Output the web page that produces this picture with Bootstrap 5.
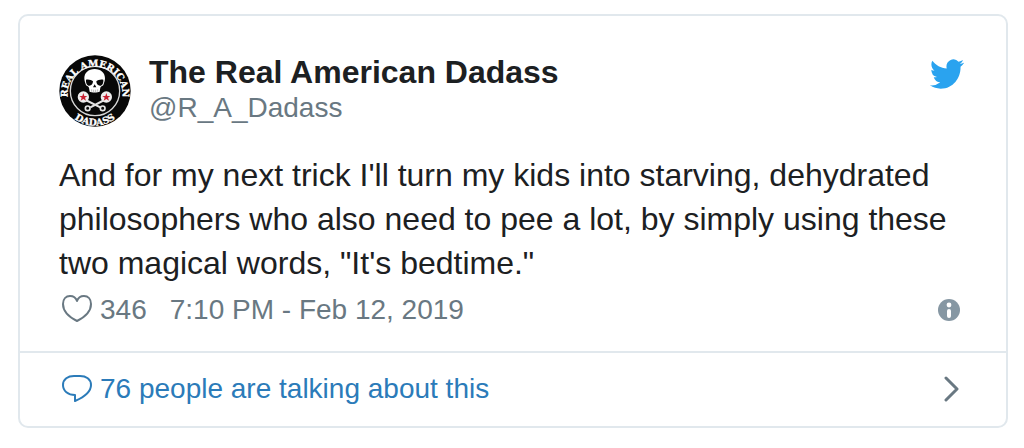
<!DOCTYPE html>
<html lang="en">
<head>
<meta charset="utf-8">
<meta name="viewport" content="width=device-width, initial-scale=1">
<title>The Real American Dadass</title>
<link rel="stylesheet" href="https://cdn.jsdelivr.net/npm/bootstrap@5.3.0/dist/css/bootstrap.min.css">
<style>
  body { font-family: "Liberation Sans", Arial, sans-serif; background: #fff; color: #1c2022; }
  .page-wrap { padding: 14px 16px 20px 18px; }
  .tweet { border: 2px solid #e1e8ed; border-radius: 10px; color: #1c2022; }
  .tweet a { text-decoration: none; }
  .tweet-body { padding: 39px 42px 21px 39px; }
  .avatar { width: 72px; height: 72px; }
  .author { margin-left: 18px; }
  .author-name { font-size: 32px; line-height: 34px; font-weight: 700; color: #1c2022; }
  .author-handle { font-size: 28px; line-height: 38px; color: #697882; }
  .bird { width: 34px; height: 30px; margin-top: 4px; }
  .tweet-text { font-size: 32px; line-height: 44px; margin: 26px 0 5px; }
  .meta { font-size: 28px; line-height: 40px; color: #697882; }
  .meta a { color: inherit; }
  .meta-date { margin-left: 23px; }
  .glyph { width: 30px; height: 30px; margin: 0 8px 0 3px; }
  .talk { border-top: 2px solid #e1e8ed; padding: 16px 47px 17px 39px; font-size: 28px; line-height: 40px; color: #2b7bb9; }
</style>
</head>
<body>
<main class="page-wrap">
  <article class="tweet card bg-white">
    <div class="tweet-body">
      <header class="d-flex align-items-start">
        <a href="#" aria-label="Profile" class="flex-shrink-0 d-flex">
          <svg class="avatar" viewBox="0 0 216 216" aria-hidden="true">
            <defs>
              <path id="arc-top" d="M27 130A82 82 0 1 1 189 130"/>
              <path id="arc-bottom" d="M10 138A102 102 0 0 0 206 138"/>
            </defs>
            <circle cx="108" cy="108" r="107" fill="#080808"/>
            <circle cx="108" cy="108" r="74" fill="none" stroke="#d8d8d8" stroke-width="4"/>
            <g fill="#fff" stroke="#fff" stroke-width="1" font-family="DejaVu Serif, serif" font-weight="700" text-anchor="middle">
              <text font-size="28"><textPath href="#arc-top" startOffset="50%">REAL AMERICAN</textPath></text>
              <text font-size="28"><textPath href="#arc-bottom" startOffset="50%">DADASS</textPath></text>
            </g>
            <g fill="none" stroke="#e4e4e4" stroke-width="6">
              <path d="M80 135L124 157M136 135L94 157"/>
              <circle cx="86" cy="160" r="7" stroke-width="5"/>
              <circle cx="131" cy="160" r="7" stroke-width="5"/>
            </g>
            <circle cx="73" cy="126" r="17" fill="#eee"/>
            <circle cx="142" cy="126" r="17" fill="#eee"/>
            <path fill="#c82031" d="M73 114l3 9h9l-7 5 3 9-8-5-8 5 3-9-7-5h9zM142 114l3 9h9l-7 5 3 9-8-5-8 5 3-9-7-5h9z"/>
            <path fill="#fff" d="M107 42C88 42 76 54 76 70c0 8 3 13 4 18 1 6 9 5 10 10l2 12c5 3 25 3 30 0l2-12c1-5 9-4 10-10 1-5 4-10 4-18 0-16-12-28-31-28z"/>
            <path fill="#080808" d="M81 74c7-2 16 0 21 5 0 8-5 13-11 13-7 0-11-8-10-18zM133 74c-7-2-16 0-21 5 0 8 5 13 11 13 7 0 11-8 10-18zM107 88l5 9h-10z"/>
            <path d="M98 103v7M104 104v7M110 104v7M116 103v7" stroke="#999" stroke-width="2"/>
          </svg>
        </a>
        <a href="#" class="author d-flex flex-column flex-grow-1">
          <span class="author-name">The Real American Dadass</span>
          <span class="author-handle">@R_A_Dadass</span>
        </a>
        <a href="#" aria-label="View on Twitter" class="flex-shrink-0 d-flex">
          <svg class="bird" viewBox="0 2 24 20" preserveAspectRatio="none" fill="#2aa3ef" aria-hidden="true"><path d="M23.954 4.569a10 10 0 0 1-2.825.775 4.958 4.958 0 0 0 2.163-2.723c-.951.555-2.005.959-3.127 1.184a4.92 4.92 0 0 0-8.384 4.482C7.691 8.094 4.066 6.13 1.64 3.161a4.822 4.822 0 0 0-.666 2.475c0 1.71.87 3.213 2.188 4.096a4.904 4.904 0 0 1-2.228-.616v.061a4.923 4.923 0 0 0 3.946 4.827 4.996 4.996 0 0 1-2.212.085 4.937 4.937 0 0 0 4.604 3.417 9.868 9.868 0 0 1-6.102 2.105c-.39 0-.779-.023-1.17-.067a13.995 13.995 0 0 0 7.557 2.209c9.054 0 13.999-7.496 13.999-13.986 0-.209 0-.42-.015-.63a9.936 9.936 0 0 0 2.46-2.548z"/></svg>
        </a>
      </header>
      <p class="tweet-text">And for my next trick I'll turn my kids into starving, dehydrated philosophers who also need to pee a lot, by simply using these two magical words, "It's bedtime."</p>
      <div class="meta d-flex align-items-center">
        <a href="#" class="d-flex align-items-center" aria-label="346 likes">
          <svg class="glyph" viewBox="0 0 30 30" fill="none" stroke="#697882" stroke-width="2" stroke-linejoin="round" aria-hidden="true"><path d="M15 26C9 23 1 17 1 9 1 4 4 1 8 1c3 0 6 2 7 5 1-3 4-5 7-5 4 0 7 3 7 8 0 8-8 14-14 17z"/></svg>
          <span>346</span>
        </a>
        <a href="#" class="meta-date">7:10 PM - Feb 12, 2019</a>
        <a href="#" class="ms-auto d-flex" aria-label="Twitter Ads info and privacy">
          <svg width="27" height="22" viewBox="0 0 27 22" aria-hidden="true"><circle cx="12" cy="11" r="11" fill="#8697a3"/><circle cx="12" cy="6" r="2.4" fill="#fff"/><path d="M12 12v5" stroke="#fff" stroke-width="4" stroke-linecap="round"/></svg>
        </a>
      </div>
    </div>
    <a href="#" class="talk d-flex align-items-center">
      <svg class="glyph" viewBox="0 0 30 30" fill="none" stroke="#2b7bb9" stroke-width="2" stroke-linejoin="round" aria-hidden="true"><path d="M13 21C6 21 1 17 1 11 1 5 6 2 12 2h6c6 0 11 3 11 9 0 8-9 13-16 16z"/></svg>
      <span>76 people are talking about this</span>
      <svg class="ms-auto" width="16" height="26" viewBox="0 0 16 26" fill="none" stroke="#697882" stroke-width="3" stroke-linecap="round" stroke-linejoin="round" aria-hidden="true"><path d="M3 2l11 11L3 24"/></svg>
    </a>
  </article>
</main>
<script src="https://cdn.jsdelivr.net/npm/bootstrap@5.3.0/dist/js/bootstrap.bundle.min.js"></script>
</body>
</html>
